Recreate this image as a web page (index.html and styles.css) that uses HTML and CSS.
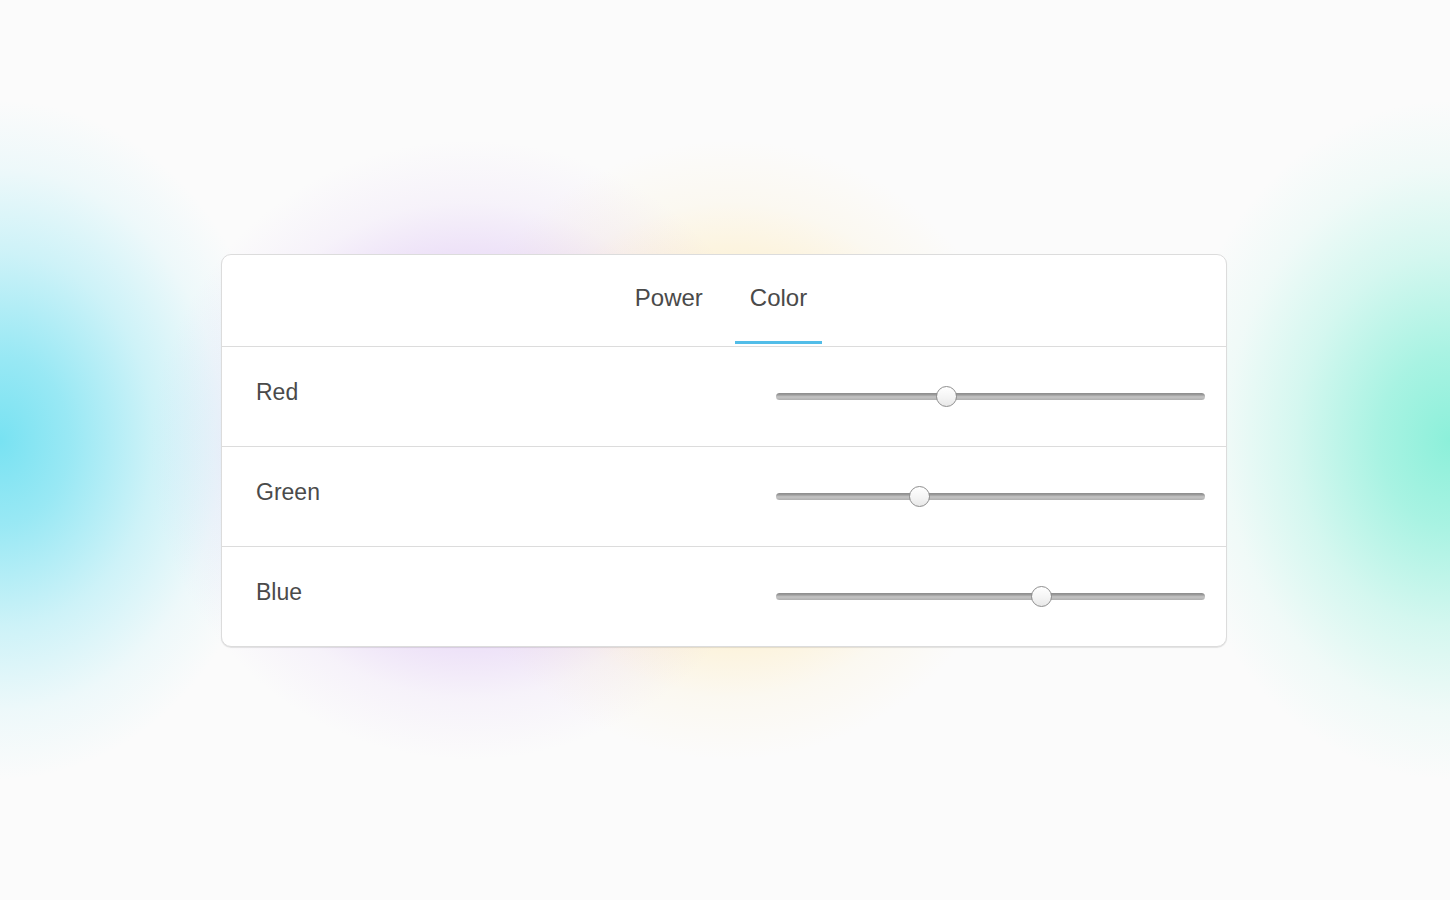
FILE: index.html
```html
<!DOCTYPE html>
<html lang="en">
<head>
<meta charset="utf-8">
<title>Light settings</title>
<link rel="stylesheet" href="styles.css">
</head>
<body>
<main class="stage">
  <section class="card">
    <nav class="tabs">
      <button class="tab">Power</button>
      <button class="tab tab-active">Color</button>
    </nav>
    <div class="row">
      <span class="label">Red</span>
      <input class="slider" type="range" min="0" max="100" step="0.1" value="39.2">
    </div>
    <div class="row">
      <span class="label">Green</span>
      <input class="slider" type="range" min="0" max="100" step="0.1" value="32.7">
    </div>
    <div class="row">
      <span class="label">Blue</span>
      <input class="slider" type="range" min="0" max="100" step="0.1" value="62.4">
    </div>
  </section>
</main>
</body>
</html>
```

FILE: styles.css
```css
html, body {
  margin: 0;
  padding: 0;
  height: 100%;
}

body {
  font-family: "Liberation Sans", Arial, sans-serif;
  color: #4a4a4a;
  background-color: #fbfbfb;
  background-image:
    radial-gradient(ellipse 280px 340px at 0px 440px, rgba(120, 226, 242, 1) 0%, rgba(120, 226, 242, 0.75) 25%, rgba(120, 226, 242, 0.35) 55%, rgba(120, 226, 242, 0.1) 80%, rgba(120, 226, 242, 0) 100%),
    radial-gradient(ellipse 280px 340px at 1450px 440px, rgba(140, 240, 218, 1) 0%, rgba(140, 240, 218, 0.75) 25%, rgba(140, 240, 218, 0.35) 55%, rgba(140, 240, 218, 0.1) 80%, rgba(140, 240, 218, 0) 100%),
    radial-gradient(ellipse 320px 310px at 470px 450px, rgba(205, 165, 240, 0.85) 0%, rgba(205, 165, 240, 0.45) 50%, rgba(205, 165, 240, 0.1) 80%, rgba(205, 165, 240, 0) 100%),
    radial-gradient(ellipse 300px 310px at 730px 450px, rgba(255, 225, 150, 0.85) 0%, rgba(255, 225, 150, 0.45) 50%, rgba(255, 225, 150, 0.1) 80%, rgba(255, 225, 150, 0) 100%);
  background-repeat: no-repeat;
}

.stage {
  height: 100%;
  display: flex;
  align-items: center;
  justify-content: center;
  padding-right: 2px;
}

.card {
  width: 1006px;
  box-sizing: border-box;
  background: #ffffff;
  border: 1px solid #dcdcdc;
  border-radius: 10px;
  box-shadow: 0 1px 1px rgba(0, 0, 0, 0.1);
  overflow: hidden;
}

.tabs {
  height: 92px;
  display: flex;
  justify-content: center;
  align-items: stretch;
  gap: 17px;
  padding-right: 6px;
  border-bottom: 1px solid #dcdcdc;
  box-sizing: border-box;
}

.tab {
  font-family: inherit;
  font-size: 24px;
  color: #4a4a4a;
  background: none;
  border: none;
  padding: 0 15px;
  border-bottom: 3px solid transparent;
  margin-bottom: 2px;
  cursor: pointer;
}

.tab-active {
  border-bottom-color: #52bde8;
}

.row {
  height: 100px;
  display: flex;
  align-items: center;
  justify-content: space-between;
  padding: 0 21px 0 34px;
  border-bottom: 1px solid #dcdcdc;
  box-sizing: border-box;
}

.row:last-child {
  border-bottom: none;
  height: 99px;
}

.label {
  font-size: 23px;
  margin-top: -8px;
}

.slider {
  -webkit-appearance: none;
  appearance: none;
  width: 429px;
  height: 21px;
  margin: 0;
  background: transparent;
}

.slider:focus {
  outline: none;
}

.slider::-webkit-slider-runnable-track {
  height: 7px;
  border-radius: 4px;
  background: linear-gradient(to bottom, #8c8c8c 0%, #9a9a9a 25%, #c4c4c4 55%, #b0b0b0 100%);
}

.slider::-webkit-slider-thumb {
  -webkit-appearance: none;
  appearance: none;
  width: 21px;
  height: 21px;
  margin-top: -7px;
  border-radius: 50%;
  box-sizing: border-box;
  border: 1px solid #8e8e8e;
  background: linear-gradient(to bottom, #ffffff 0%, #f3f3f3 60%, #e8e8e8 100%);
}
```
